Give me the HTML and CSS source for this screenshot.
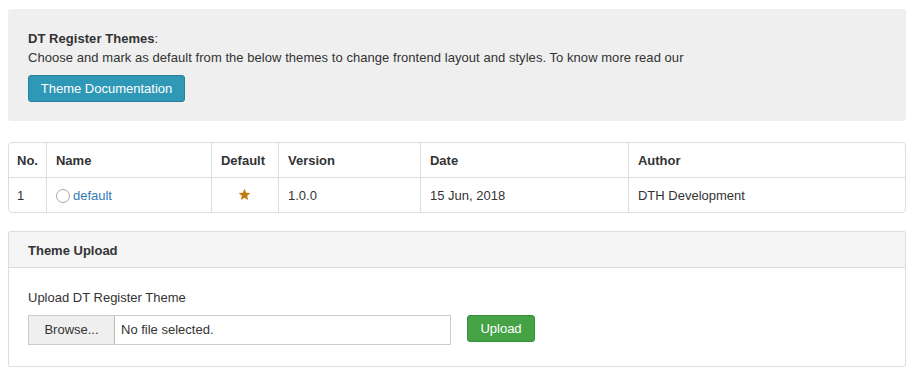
FILE: index.html
```html
<!DOCTYPE html>
<html lang="en">

<head>
    <meta charset="UTF-8">
    <title>DT Register Themes</title>
    <link rel="stylesheet" href="styles.css">
</head>

<body>

    <div class="well">
        <p class="intro"><strong>DT Register Themes</strong>:<br>
            Choose and mark as default from the below themes to change frontend layout and styles. To know more read our</p>
        <a class="btn btn-info" href="#">Theme Documentation</a>
    </div>

    <table class="themes">
        <thead>
            <tr>
                <th class="col-no">No.</th>
                <th class="col-name">Name</th>
                <th class="col-default">Default</th>
                <th class="col-version">Version</th>
                <th class="col-date">Date</th>
                <th>Author</th>
            </tr>
        </thead>
        <tbody>
            <tr>
                <td>1</td>
                <td><span class="radio"></span><a href="#">default</a></td>
                <td class="center">
                    <svg class="star" width="13" height="13" viewBox="0 0 24 24">
                        <path d="M12 1.5l3.1 7.1 7.7.7-5.8 5.1 1.7 7.6L12 18l-6.7 4 1.7-7.6-5.8-5.1 7.7-.7z" fill="#c47a10" />
                    </svg>
                </td>
                <td>1.0.0</td>
                <td>15 Jun, 2018</td>
                <td>DTH Development</td>
            </tr>
        </tbody>
    </table>

    <div class="panel">
        <div class="panel-heading">Theme Upload</div>
        <div class="panel-body">
            <p class="label">Upload DT Register Theme</p>
            <div class="upload-row">
                <div class="file-input">
                    <span class="browse">Browse...</span>
                    <span class="file-name">No file selected.</span>
                </div>
                <a class="btn btn-success" href="#">Upload</a>
            </div>
        </div>
    </div>

</body>

</html>
```
FILE: styles.css
```css
body {
    margin: 0;
    padding: 9px 8px;
    font-family: "Liberation Sans", Arial, sans-serif;
    font-size: 13px;
    line-height: 18px;
    color: #333;
    background: #fff;
}

a {
    color: #337ab7;
    text-decoration: none;
}

.well {
    background-color: #efefef;
    border-radius: 3px;
    padding: 20px;
    height: 72px;
}

.intro {
    margin: 0 0 8px 0;
    line-height: 19px;
    letter-spacing: 0.05px;
}

.btn {
    display: inline-block;
    box-sizing: border-box;
    height: 27px;
    line-height: 25px;
    border: 1px solid transparent;
    border-radius: 3px;
    color: #fff;
    text-align: center;
}

.btn-info {
    background-color: #2f98b6;
    border-color: #26809a;
    width: 157px;
}

.btn-success {
    background-color: #45a345;
    border-color: #3a8f3a;
    width: 68px;
}

.themes {
    width: 100%;
    margin-top: 21px;
    border-collapse: separate;
    border-spacing: 0;
    border: 1px solid #ddd;
    border-radius: 4px;
}

.themes th,
.themes td {
    text-align: left;
    padding: 1px 9px 0 9px;
    height: 33px;
    border-left: 1px solid #ddd;
}

.themes th:first-child,
.themes td:first-child {
    border-left: none;
    padding-left: 8px;
    padding-right: 8px;
}

.themes th {
    border-bottom: 1px solid #ddd;
    font-weight: bold;
}

.themes .col-no { width: 17px; }
.themes .col-name { width: 146px; }
.themes .col-default { width: 48px; }
.themes .col-version { width: 123px; }
.themes .col-date { width: 189px; }

.themes .center {
    text-align: center;
}

.radio {
    display: inline-block;
    box-sizing: border-box;
    width: 14px;
    height: 14px;
    border: 1px solid #aaa;
    border-radius: 50%;
    vertical-align: -3px;
    margin-right: 3px;
    background: #fff;
}

.star {
    vertical-align: -1px;
}

.panel {
    margin-top: 18px;
    border: 1px solid #ddd;
    border-radius: 2px;
}

.panel-heading {
    background-color: #f5f5f5;
    border-bottom: 1px solid #ddd;
    height: 35px;
    line-height: 37px;
    padding: 0 19px;
    font-weight: bold;
}

.panel-body {
    padding: 21px 19px 21px 19px;
}

.label {
    margin: 0 0 8px 0;
}

.upload-row {
    display: flex;
    align-items: flex-start;
    gap: 16px;
}

.file-input {
    display: flex;
    box-sizing: border-box;
    width: 423px;
    height: 30px;
    border: 1px solid #ccc;
}

.browse {
    box-sizing: border-box;
    width: 86px;
    background-color: #efefef;
    border-right: 1px solid #bbb;
    text-align: center;
    line-height: 28px;
}

.file-name {
    padding-left: 6px;
    line-height: 28px;
}
```
